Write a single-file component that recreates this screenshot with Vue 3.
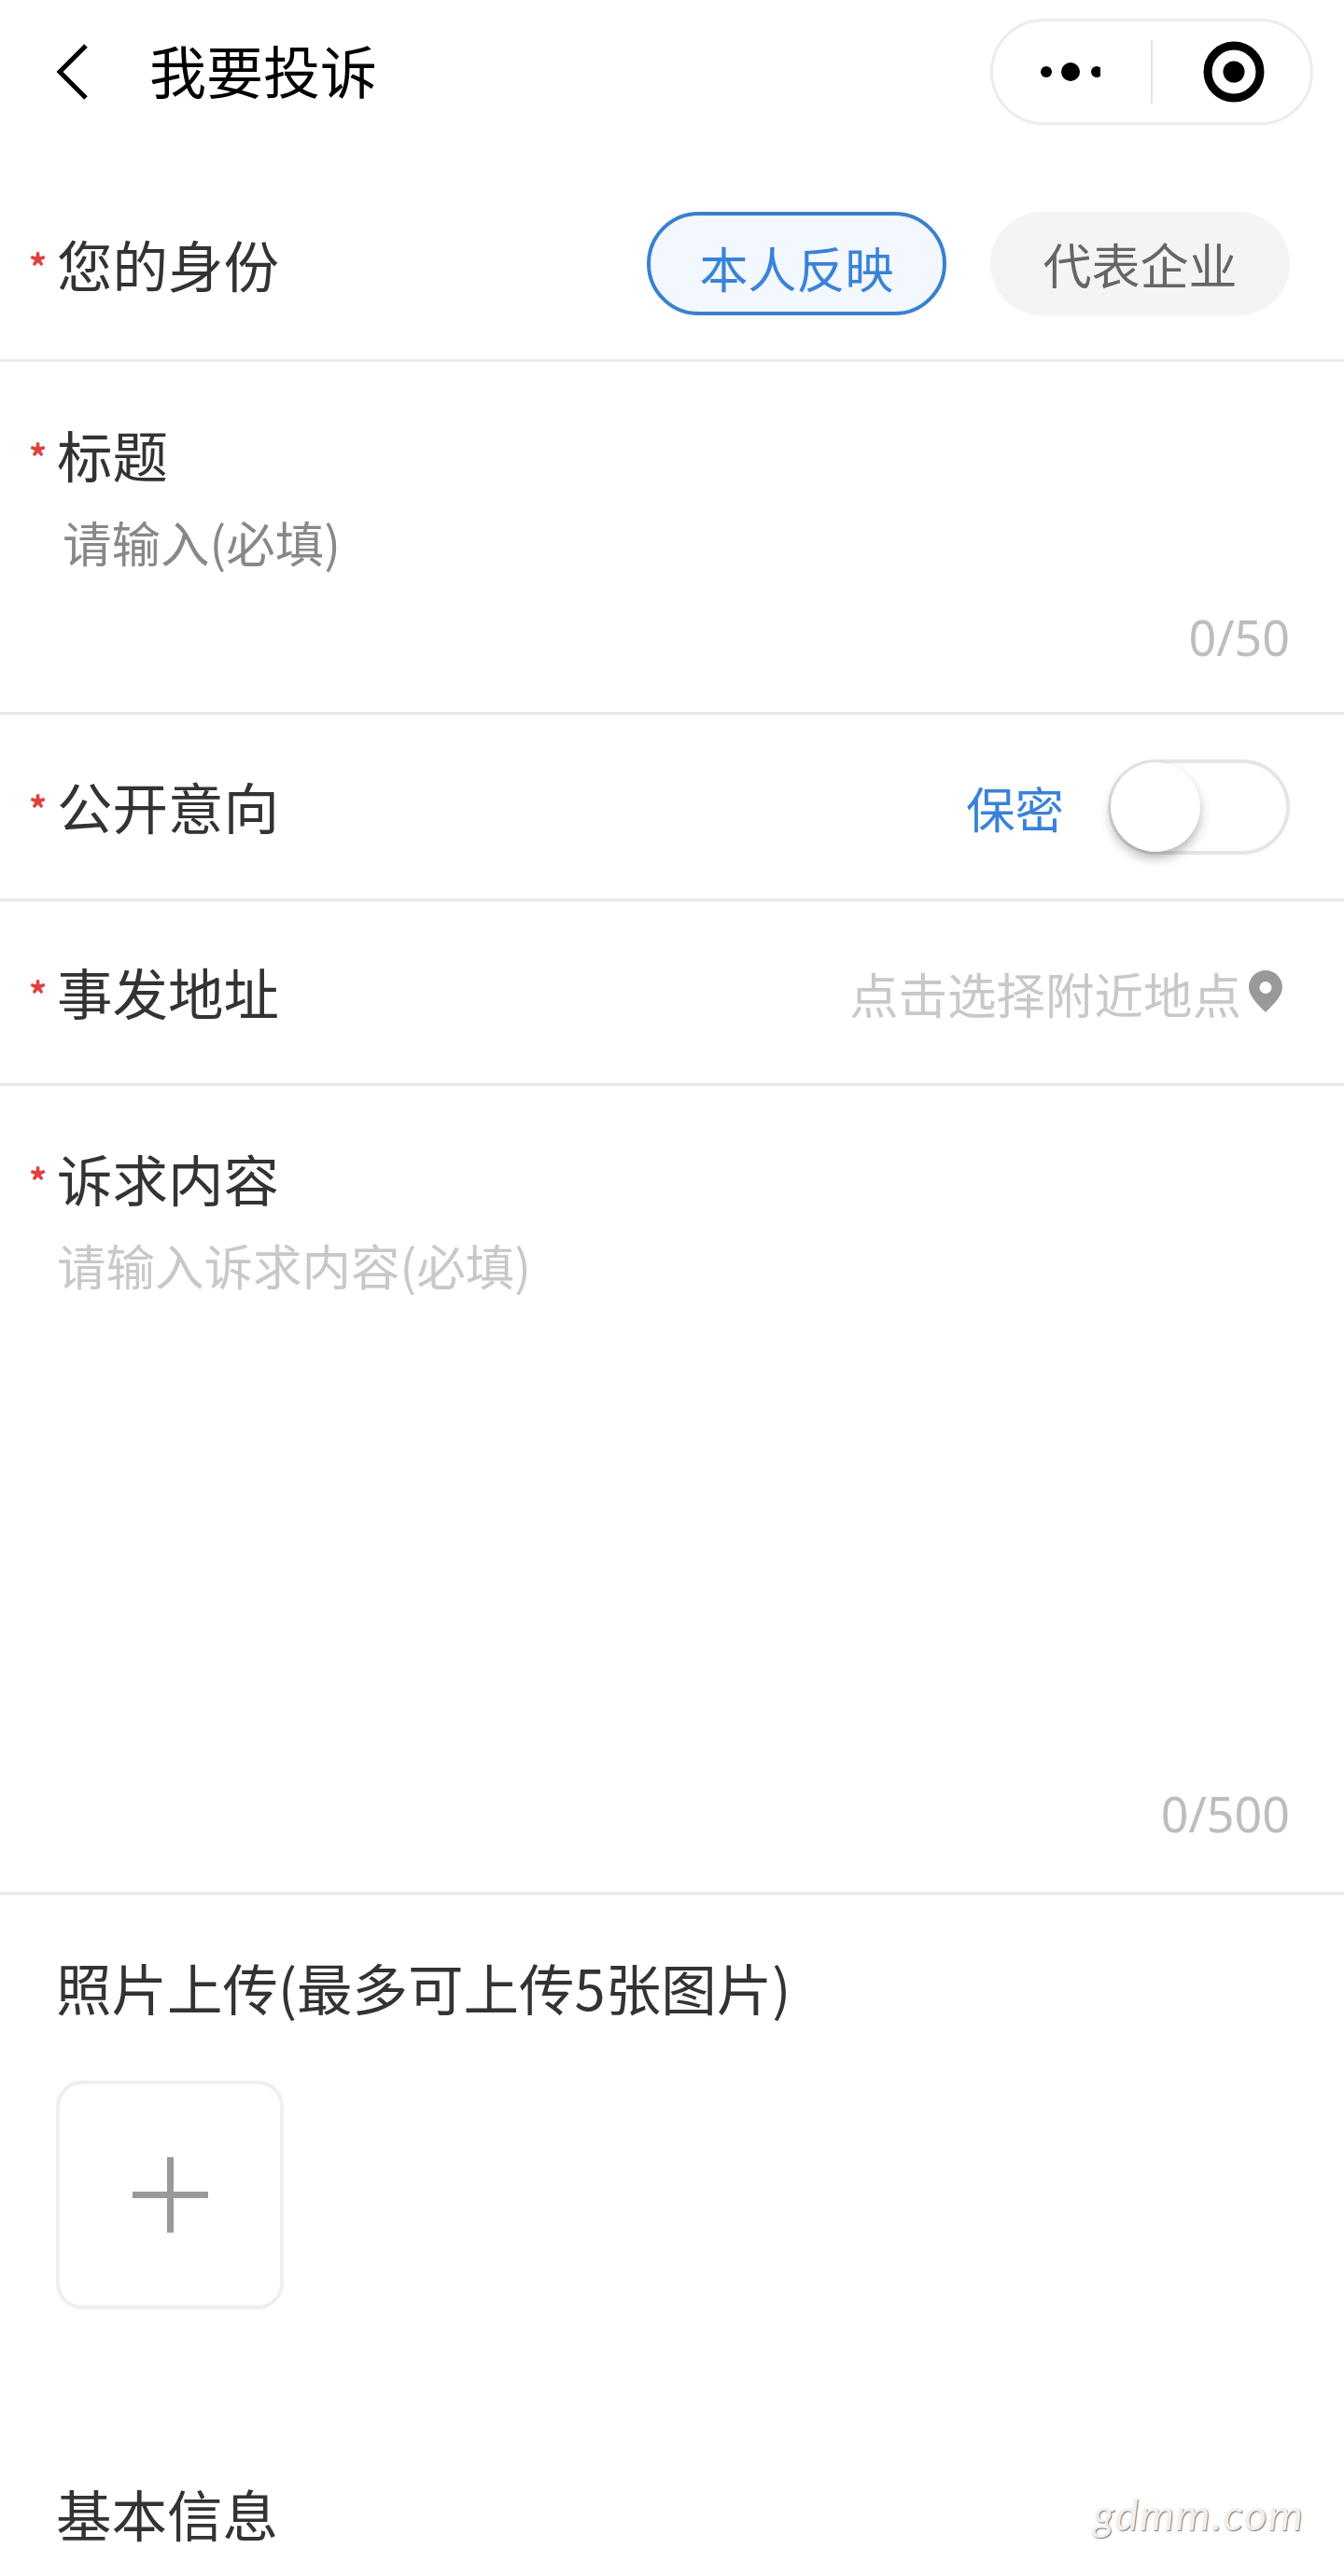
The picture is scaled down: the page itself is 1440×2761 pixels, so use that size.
<template>
  <div class="page">
    <header class="nav">
      <div class="nav-left">
        <svg class="back" width="38" height="62" viewBox="0 0 38 62">
          <path d="M34 3 L6 31 L34 59" fill="none" stroke="#000" stroke-width="5" />
        </svg>
        <span class="nav-title">我要投诉</span>
      </div>
      <div class="capsule">
        <div class="capsule-side">
          <svg class="dots" width="64" height="24" viewBox="0 0 64 24">
            <circle cx="6" cy="12" r="6" fill="#000" />
            <circle cx="32" cy="12" r="10" fill="#000" />
            <circle cx="60" cy="12" r="6" fill="#000" />
          </svg>
        </div>
        <div class="capsule-line"></div>
        <div class="capsule-side">
          <svg class="target" width="66" height="66" viewBox="0 0 66 66">
            <circle cx="33" cy="33" r="28" fill="none" stroke="#000" stroke-width="9" />
            <circle cx="33" cy="33" r="11.500" fill="#000" />
          </svg>
        </div>
      </div>
    </header>

    <section class="row row-identity">
      <label class="label"><i class="star">*</i>您的身份</label>
      <div class="pills">
        <span class="pill pill-on">本人反映</span>
        <span class="pill">代表企业</span>
      </div>
    </section>

    <section class="block block-title">
      <label class="label"><i class="star">*</i>标题</label>
      <p class="input-hint">请输入(必填)</p>
      <p class="counter">0/50</p>
    </section>

    <section class="row row-public">
      <label class="label"><i class="star">*</i>公开意向</label>
      <div class="right">
        <span class="secret">保密</span>
        <span class="switch"><span class="knob"></span></span>
      </div>
    </section>

    <section class="row row-address">
      <label class="label"><i class="star">*</i>事发地址</label>
      <div class="right">
        <span class="placeholder">点击选择附近地点</span>
        <svg class="pin" width="36" height="45" viewBox="0 0 36 45">
          <path fill="#999" fill-rule="evenodd" d="M18 0C8 0 0 8 0 18c0 10 10 19 18 27 8-8 18-17 18-27C36 8 28 0 18 0zm0 12a6.500 6.500 0 1 1 0 13 6.500 6.500 0 0 1 0-13z" />
        </svg>
      </div>
    </section>

    <section class="block block-content">
      <label class="label"><i class="star">*</i>诉求内容</label>
      <p class="placeholder content-hint">请输入诉求内容(必填)</p>
      <p class="counter">0/500</p>
    </section>

    <section class="upload">
      <h3 class="plain-title">照片上传(最多可上传5张图片)</h3>
      <div class="upload-box"><span class="plus"></span></div>
    </section>

    <section class="basic">
      <h3 class="plain-title">基本信息</h3>
    </section>

    <span class="watermark">gdmm.com</span>
  </div>
</template>

<script setup>
</script>

<style>
html,
body {
  margin: 0;
  background: #fff;
}
</style>

<style scoped>
.page {
  position: relative;
  width: 1440px;
  height: 2761px;
  overflow: hidden;
  background: #fff;
  color: #333;
  font-family: "Noto Sans CJK SC", "Noto Sans", sans-serif;
}

.nav {
  display: flex;
  justify-content: space-between;
  align-items: flex-start;
  height: 181px;
  padding: 20px 33px 0 58px;
  box-sizing: border-box;
}

.nav-left {
  display: flex;
  align-items: center;
  height: 114px;
}

.back {
  margin-right: 64px;
}

.nav-title {
  font-size: 61px;
  line-height: 80px;
  color: #000;
  position: relative;
  top: -2px;
}

.capsule {
  display: flex;
  align-items: center;
  width: 346px;
  height: 114px;
  box-sizing: border-box;
  border: 3px solid #ececec;
  border-radius: 57px;
}

.capsule-side {
  flex: 1;
  display: flex;
  justify-content: center;
  align-items: center;
}

.dots {
  margin-right: 4px;
}

.target {
  margin-left: 5px;
}

.capsule-line {
  width: 2px;
  height: 68px;
  background: #e2e2e2;
}

.row {
  display: flex;
  justify-content: space-between;
  align-items: center;
  padding: 0 58px 0 31px;
  box-sizing: border-box;
  border-bottom: 3px solid #e9e9ec;
}

.row .label {
  margin-top: -3px;
}

.row-identity {
  height: 207px;
}

.row-public {
  height: 200px;
}

.row-address {
  height: 198px;
}

.block {
  padding: 0 58px 0 31px;
  box-sizing: border-box;
  border-bottom: 3px solid #e9e9ec;
}

.block-title {
  height: 378px;
  padding-top: 63px;
}

.block-content {
  height: 867px;
  padding-top: 63px;
}

.label {
  display: flex;
  align-items: center;
  font-size: 59.500px;
  line-height: 70px;
  color: #333;
}

.star {
  width: 30px;
  padding-top: 6px;
  font-size: 38px;
  font-weight: 700;
  font-style: normal;
  color: #e04040;
  line-height: 64px;
}

.pills {
  display: flex;
  gap: 47px;
  margin-top: -2px;
}

.pill {
  display: flex;
  justify-content: center;
  align-items: center;
  width: 321px;
  height: 111px;
  box-sizing: border-box;
  border-radius: 56px;
  background: #f4f4f4;
  font-size: 52px;
  color: #666;
}

.pill-on {
  border: 4px solid #3a80d0;
  background: #f2f8fe;
  color: #3a82d8;
  padding-top: 8px;
}

.input-hint {
  margin: 24px 0 0 36px;
  font-size: 52.500px;
  line-height: 70px;
  color: #888;
}

.counter {
  margin: 0;
  font-family: "Noto Sans", sans-serif;
  font-size: 52px;
  line-height: 70px;
  text-align: right;
  color: #bdbdbd;
}

.block-title .counter {
  margin-top: 33px;
}

.block-content .counter {
  margin-top: 519px;
}

.right {
  display: flex;
  align-items: center;
}

.secret {
  margin-right: 47px;
  font-size: 52.500px;
  line-height: 70px;
  color: #3a82d8;
}

.switch {
  position: relative;
  display: block;
  width: 195px;
  height: 102px;
  box-sizing: border-box;
  border: 4px solid #e5e5e5;
  border-radius: 51px;
}

.knob {
  position: absolute;
  left: -1px;
  top: -1px;
  width: 96px;
  height: 96px;
  border-radius: 50%;
  background: #fff;
  box-shadow: 0 7px 12px rgba(0, 0, 0, 0.28);
}

.placeholder {
  font-size: 52.500px;
  line-height: 70px;
  color: #c6c8cc;
}

.pin {
  margin: 0 8px 0 8px;
  position: relative;
  top: -1px;
}

.content-hint {
  margin: 23px 0 0 30px;
}

.upload {
  padding: 0 0 0 60px;
}

.plain-title {
  margin: 0;
  font-size: 59.500px;
  line-height: 70px;
  font-weight: 400;
  color: #333;
}

.upload .plain-title {
  padding-top: 63px;
}

.upload-box {
  display: flex;
  justify-content: center;
  align-items: center;
  width: 244px;
  height: 245px;
  margin-top: 66px;
  box-sizing: border-box;
  border: 4px solid #efefef;
  border-radius: 28px;
}

.plus {
  position: relative;
  display: block;
  width: 81px;
  height: 81px;
  background:
    linear-gradient(#9a9a9a, #9a9a9a) center / 81px 7px no-repeat,
    linear-gradient(#9a9a9a, #9a9a9a) center / 7px 81px no-repeat;
}

.basic {
  padding: 183px 0 0 60px;
}

.watermark {
  position: absolute;
  left: 1171px;
  top: 2664px;
  font-family: Lato, sans-serif;
  font-style: italic;
  font-size: 47px;
  line-height: 60px;
  letter-spacing: 1.500px;
  color: #f0f0f0;
  text-shadow: 1px 1px 1px #777;
}
</style>
